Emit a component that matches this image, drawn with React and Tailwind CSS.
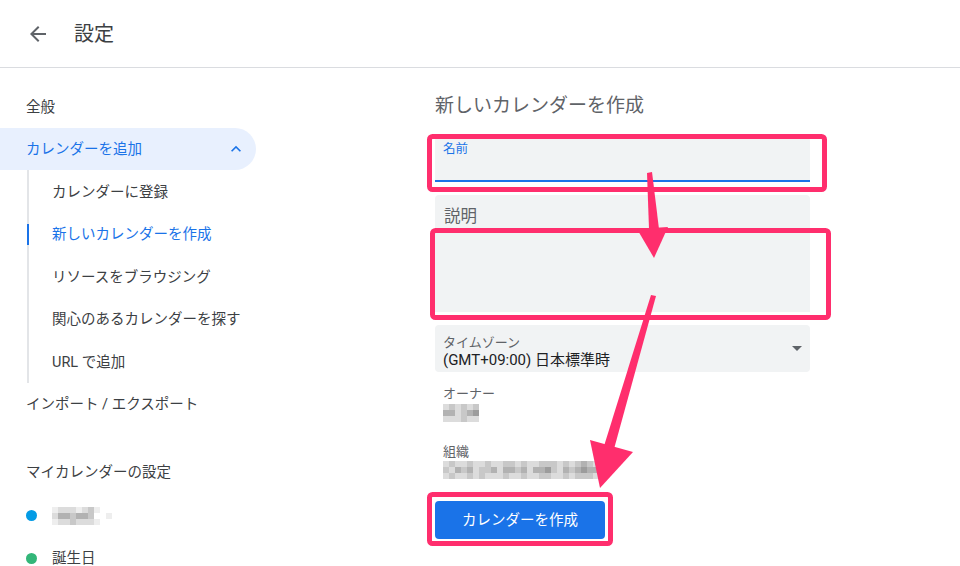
import { useState } from "react";

const PALETTE = ["bg-transparent", "bg-[#eeeeee]", "bg-[#dcdcdc]", "bg-[#c8c8c8]", "bg-[#b2b2b2]", "bg-[#9c9c9c]"];

const SIDE_BLUR = ["12221231000", "24434430010", "12232221000"];
const OWNER_BLUR = ["23232300", "44234500", "22232200"];
const ORG_BLUR = [
    "2322322322332322333232343220",
    "3243423342443424453243454430",
    "2322323222322322332232333220",
];

function Pixels({ rows }) {
    return (
        <div className="flex flex-col">
            {rows.map((row, i) => (
                <div key={i} className="flex">
                    {row.split("").map((c, j) => (
                        <div key={j} className={`w-[6px] h-[6px] ${PALETTE[Number(c)]}`} />
                    ))}
                </div>
            ))}
        </div>
    );
}

const subItems = ["カレンダーに登録", "新しいカレンダーを作成", "リソースをブラウジング", "関心のあるカレンダーを探す", "URL で追加"];

export default function App() {
    const [active] = useState(1);

    return (
        <div className="relative w-[960px] h-[566px] overflow-hidden bg-white text-[#3c4043] font-['Roboto','Noto_Sans_CJK_JP',sans-serif]">
            {/* header */}
            <div className="h-[68px] flex items-center border-b border-[#dadce0]">
                <svg viewBox="0 0 24 24" className="w-[24px] h-[24px] ml-[26px] fill-[#5f6368]">
                    <path d="M20 11H7.83l5.59-5.59L12 4l-8 8 8 8 1.41-1.41L7.83 13H20v-2z" />
                </svg>
                <h1 className="ml-[24px] text-[20px] leading-[24px] text-[#3c4043]">設定</h1>
            </div>

            <div className="flex">
                {/* sidebar */}
                <nav className="w-[256px] shrink-0 pt-[17px] text-[14.5px]">
                    <div className="h-[42.5px] flex items-center pl-[26px] pt-[3px]">全般</div>
                    <div className="h-[42.5px] flex items-center justify-between pl-[26px] pr-[10px] rounded-r-full bg-[#e8f0fe] text-[#1a73e8]">
                        <span className="pt-[3px]">カレンダーを追加</span>
                        <svg viewBox="0 0 24 24" className="w-[20px] h-[20px] fill-[#1a73e8]">
                            <path d="M12 8l-6 6 1.41 1.41L12 10.83l4.59 4.58L18 14z" />
                        </svg>
                    </div>
                    <div className="ml-[27px] my-[10px] border-l-2 border-[#e3e5e8]">
                        <div className="-my-[10px]">
                            {subItems.map((t, i) => (
                                <div
                                    key={t}
                                    className={`relative h-[42.5px] flex items-center pl-[23px] pt-[3px] ${i === active ? "text-[#1a73e8]" : ""}`}
                                >
                                    {i === active && <span className="absolute -left-[2px] top-[11px] w-[2px] h-[21px] bg-[#1a73e8]" />}
                                    {t}
                                </div>
                            ))}
                        </div>
                    </div>
                    <div className="h-[42.5px] flex items-center pl-[26px] pt-[3px]">インポート / エクスポート</div>
                    <div className="mt-[25.5px] h-[42.5px] flex items-center pl-[26px] pt-[3px]">マイカレンダーの設定</div>
                    <div className="h-[43px] flex items-center pl-[26px] pt-[2px]">
                        <span className="w-[11px] h-[11px] rounded-full bg-[#039be5]" />
                        <div className="ml-[15px]">
                            <Pixels rows={SIDE_BLUR} />
                        </div>
                    </div>
                    <div className="h-[42.5px] flex items-center pl-[26px] pt-[3px]">
                        <span className="w-[11px] h-[11px] rounded-full bg-[#33b679]" />
                        <span className="ml-[15px]">誕生日</span>
                    </div>
                </nav>

                {/* main */}
                <main className="ml-[179px] w-[375px] pt-[26px]">
                    <h2 className="text-[19px] leading-[24px] text-[#5f6368]">新しいカレンダーを作成</h2>

                    <div className="mt-[19px] h-[45px] rounded-t-[4px] bg-[#f1f3f4] border-b-2 border-[#1a73e8] pl-[8px] pt-[5px]">
                        <div className="text-[12.5px] leading-[14px] text-[#1a73e8]">名前</div>
                    </div>

                    <div className="mt-[13px] h-[117px] rounded-t-[4px] bg-[#f1f3f4] pl-[9px] pt-[12px]">
                        <div className="text-[16.5px] leading-[20px] text-[#5f6368]">説明</div>
                    </div>

                    <div className="mt-[13px] h-[47px] rounded-[4px] bg-[#f1f3f4] pl-[8px] pr-[8px] pt-[10px] flex justify-between">
                        <div>
                            <div className="text-[13px] leading-[16px] text-[#5f6368]">タイムゾーン</div>
                            <div className="text-[15px] leading-[19px] text-[#202124]">(GMT+09:00) 日本標準時</div>
                        </div>
                        <svg viewBox="0 0 10 5" className="mt-[11px] w-[10px] h-[5px] fill-[#5f6368]">
                            <path d="M0 0h10L5 5z" />
                        </svg>
                    </div>

                    <div className="pl-[8px]">
                        <div className="mt-[14px] text-[13px] leading-[16px] text-[#5f6368]">オーナー</div>
                        <div className="mt-[2px]">
                            <Pixels rows={OWNER_BLUR} />
                        </div>
                        <div className="mt-[22px] text-[13px] leading-[16px] text-[#5f6368]">組織</div>
                        <div className="mt-[1px]">
                            <Pixels rows={ORG_BLUR} />
                        </div>
                    </div>

                    <button className="mt-[22px] w-[170px] h-[38px] rounded-[4px] bg-[#1a73e8] text-white text-[14.5px] pt-[2px]">
                        カレンダーを作成
                    </button>
                </main>
            </div>

            {/* annotation overlay */}
            <svg className="absolute inset-0 pointer-events-none" width="960" height="566" viewBox="0 0 960 566">
                <g fill="none" stroke="#ff2e6d" strokeWidth="5">
                    <rect x="429.5" y="136.5" width="395" height="53" rx="3" />
                    <rect x="432.5" y="230.5" width="396" height="87" rx="3" />
                    <rect x="429.5" y="494.5" width="181" height="49" rx="3" />
                </g>
                <g fill="#ff2e6d">
                    <polygon points="647,173 652,172 659,229 649,229" />
                    <polygon points="637,229 668,227 654,258" />
                    <polygon points="651,295 656,296 614,449 604,446" />
                    <polygon points="590,440 633,452 600,488" />
                </g>
            </svg>
        </div>
    );
}
